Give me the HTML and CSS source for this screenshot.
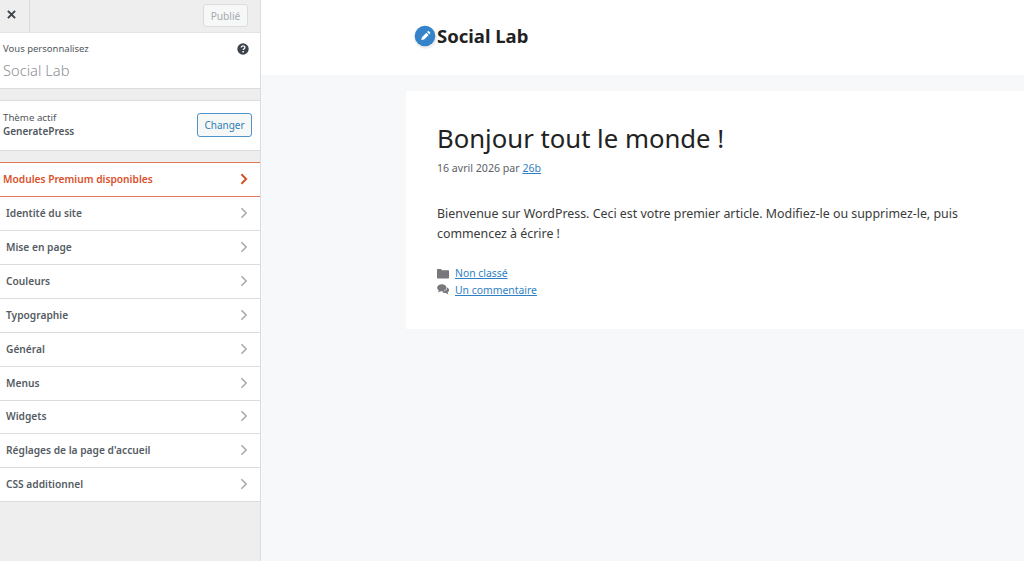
FILE: index.html
```html
<!DOCTYPE html>
<html lang="fr">
<head>
<meta charset="utf-8">
<title>Personnaliser : Social Lab</title>
<link rel="stylesheet" href="styles.css">
</head>
<body>
<div class="app">
  <aside class="panel">
    <div class="topbar">
      <button class="close" aria-label="Fermer">
        <svg width="9" height="9" viewBox="0 0 10 10"><path d="M1 1l8 8M9 1l-8 8" stroke="#3c434a" stroke-width="2.2" fill="none"/></svg>
      </button>
      <button class="publish">Publié</button>
    </div>
    <section class="info">
      <div class="info-text">
        <div class="label">Vous personnalisez</div>
        <div class="site">Social Lab</div>
      </div>
      <svg class="help" width="12" height="12" viewBox="0 0 12 12"><circle cx="6" cy="6" r="5.7" fill="#3c434a"/><path d="M4.2 4.6c0-2.3 3.7-2.3 3.7-.2 0 1.300-1.700 1.300-1.700 2.600" stroke="#fff" stroke-width="1.300" fill="none"/><rect x="5.400" y="8" width="1.500" height="1.500" fill="#fff"/></svg>
    </section>
    <section class="theme">
      <div>
        <div class="label theme-label">Thème actif</div>
        <div class="theme-name">GeneratePress</div>
      </div>
      <button class="change">Changer</button>
    </section>
    <nav class="menu">
      <a class="row premium">Modules Premium disponibles<svg class="chev" width="8" height="12" viewBox="0 0 9 14"><path d="M1.500 1.500L7 7l-5.500 5.500" fill="none" stroke="#d54e21" stroke-width="2.200"/></svg></a>
      <a class="row">Identité du site<svg class="chev" width="8" height="12" viewBox="0 0 9 14"><path d="M1.500 1.500L7 7l-5.500 5.500" fill="none" stroke="#a7aaad" stroke-width="1.800"/></svg></a>
      <a class="row">Mise en page<svg class="chev" width="8" height="12" viewBox="0 0 9 14"><path d="M1.500 1.500L7 7l-5.500 5.500" fill="none" stroke="#a7aaad" stroke-width="1.800"/></svg></a>
      <a class="row">Couleurs<svg class="chev" width="8" height="12" viewBox="0 0 9 14"><path d="M1.500 1.500L7 7l-5.500 5.500" fill="none" stroke="#a7aaad" stroke-width="1.800"/></svg></a>
      <a class="row">Typographie<svg class="chev" width="8" height="12" viewBox="0 0 9 14"><path d="M1.500 1.500L7 7l-5.500 5.500" fill="none" stroke="#a7aaad" stroke-width="1.800"/></svg></a>
      <a class="row">Général<svg class="chev" width="8" height="12" viewBox="0 0 9 14"><path d="M1.500 1.500L7 7l-5.500 5.500" fill="none" stroke="#a7aaad" stroke-width="1.800"/></svg></a>
      <a class="row">Menus<svg class="chev" width="8" height="12" viewBox="0 0 9 14"><path d="M1.500 1.500L7 7l-5.500 5.500" fill="none" stroke="#a7aaad" stroke-width="1.800"/></svg></a>
      <a class="row">Widgets<svg class="chev" width="8" height="12" viewBox="0 0 9 14"><path d="M1.500 1.500L7 7l-5.500 5.500" fill="none" stroke="#a7aaad" stroke-width="1.800"/></svg></a>
      <a class="row">Réglages de la page d'accueil<svg class="chev" width="8" height="12" viewBox="0 0 9 14"><path d="M1.500 1.500L7 7l-5.500 5.500" fill="none" stroke="#a7aaad" stroke-width="1.800"/></svg></a>
      <a class="row">CSS additionnel<svg class="chev" width="8" height="12" viewBox="0 0 9 14"><path d="M1.500 1.500L7 7l-5.500 5.500" fill="none" stroke="#a7aaad" stroke-width="1.800"/></svg></a>
    </nav>
  </aside>
  <main class="preview">
    <header class="site-header">
      <svg class="logo" width="24" height="24" viewBox="0 0 24 24"><circle cx="11.500" cy="12.500" r="11.300" fill="#eeeeee"/><circle cx="11" cy="11" r="10.300" fill="#3583c9"/><path d="M7.300 15l.6-2.800 4.500-4.500 2.200 2.200-4.500 4.500zM13.100 7l.8-.8c.3-.3.7-.3 1 0l1.200 1.200c.3.300.3.700 0 1l-.8.800z" fill="#fff"/></svg>
      <span class="brand">Social Lab</span>
    </header>
    <article class="post">
      <h1>Bonjour tout le monde !</h1>
      <p class="meta">16 avril 2026 par <a href="#">26b</a></p>
      <p class="body">Bienvenue sur WordPress. Ceci est votre premier article. Modifiez-le ou supprimez-le, puis commencez à écrire !</p>
      <div class="tags">
        <div class="tag"><svg width="12" height="11" viewBox="0 0 12 11"><path d="M0 2c0-.6.4-1 1-1h3l1 1.300h6c.6 0 1 .4 1 1V9.500c0 .6-.4 1-1 1H1c-.6 0-1-.4-1-1z" fill="#77777c"/></svg><a href="#">Non classé</a></div>
        <div class="tag"><svg width="12" height="11" viewBox="0 0 12 11"><ellipse cx="4.800" cy="3.800" rx="4.700" ry="3.500" fill="#77777c"/><path d="M2 6l-1 2.500L4.500 7z" fill="#77777c"/><path d="M10 3.600c1.300.6 2 1.500 2 2.600 0 1-.6 1.800-1.400 2.300l.7 2-2.600-1.500c-1.500 0-2.900-.5-3.600-1.500 3 0 5.300-1.500 4.900-3.900z" fill="#77777c"/></svg><a href="#">Un commentaire</a></div>
      </div>
    </article>
  </main>
</div>
</body>
</html>
```
FILE: styles.css
```css
* { box-sizing: border-box; }
html, body { margin: 0; height: 100%; overflow: hidden; }
body { font-family: "Noto Sans", "Open Sans", sans-serif; color: #222; }
.app { display: flex; height: 561px; }

.panel { width: 261px; flex: none; background: #eeeeee; border-right: 1px solid #dcdcde; display: flex; flex-direction: column; }
.topbar { height: 33px; display: flex; justify-content: space-between; align-items: flex-start; border-bottom: 1px solid #e4e4e6; padding-right: 12px; }
.close { width: 30px; height: 32px; padding: 0 7px 3px 0; background: none; border: 0; border-right: 1px solid #dcdcde; display: flex; align-items: center; justify-content: center; }
.publish { margin-top: 4px; width: 45px; height: 23px; padding: 0; font: 10.200px "Noto Sans", sans-serif; color: #a7aaad; background: #f6f7f7; border: 1px solid #dcdcde; border-radius: 3px; }

.info { height: 56px; background: #fff; border-bottom: 1px solid #dcdcde; display: flex; justify-content: space-between; padding: 9px 11px 0 3px; }
.label { font-size: 9.500px; line-height: 14px; color: #50575e; }
.site { font-size: 14.700px; line-height: 20px; margin-top: 4px; color: #8c8f94; font-weight: 300; }
.help { margin-top: 1px; }

.theme { margin-top: 11px; height: 51px; background: #fff; border-top: 1px solid #dcdcde; border-bottom: 1px solid #dcdcde; display: flex; justify-content: space-between; align-items: center; padding: 0 8px 1px 3px; }
.theme-label { font-size: 9.700px; margin-top: -1px; margin-bottom: -1px; }
.theme-name { font-size: 10px; line-height: 14px; font-weight: 600; color: #50575e; }
.change { width: 55px; height: 24px; padding: 0; font: 10px "Noto Sans", sans-serif; color: #2f7fb8; background: #f6f7f7; border: 1px solid #4f94c8; border-radius: 3px; }

.menu { margin-top: 11px; display: flex; flex-direction: column; }
.row { height: 33.930px; flex: none; background: #fff; border-bottom: 1px solid #dcdcde; display: flex; align-items: center; justify-content: space-between; padding: 0 12.500px 1px 6px; font-size: 10.200px; font-weight: 600; color: #555c63; }
.premium { height: 35px; padding-left: 3px; color: #d9502a; border-top: 1px solid #e2795a; border-bottom: 1px solid #e2795a; }

.preview { flex: 1; background: #f7f8f9; display: flex; flex-direction: column; }
.site-header { height: 75px; background: #fff; display: flex; align-items: center; gap: 0; padding: 0 0 4px 153px; }
.logo { margin-top: 2px; flex: none; }
.brand { font-size: 18.500px; font-weight: 700; color: #222; margin-left: -1px; }
.post { margin: 16px 0 0 145px; height: 238px; background: #fff; padding: 29px 31px; }
.post h1 { margin: 0; font-size: 25.700px; line-height: 38px; font-weight: 400; color: #222; }
.meta { margin: 2px 0 0; font-size: 10.600px; line-height: 16px; color: #5c6166; }
.meta a, .tag a { color: #2f7fc4; }
.body { margin: 28px 0 0; font-size: 12.400px; line-height: 19.500px; color: #3a3a3a; }
.tags { margin-top: 22px; }
.tag { display: flex; align-items: center; gap: 6px; height: 16.500px; font-size: 10.400px; }
```
